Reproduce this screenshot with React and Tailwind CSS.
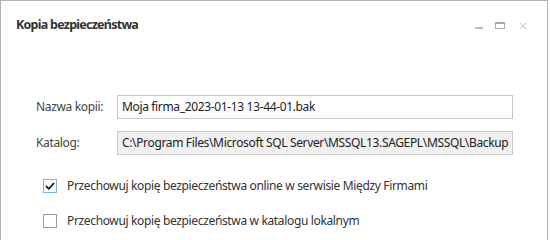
export default function App() {
  const font = { fontFamily: '"Noto Sans", "Open Sans", sans-serif' };
  return (
    <div className="w-[550px] h-[240px] bg-white overflow-hidden" style={font}>
      <div className="w-[548px] h-[260px] border border-[#b4b4b4] bg-white flex flex-col">
        <div className="flex items-center justify-between h-[48px] pl-[15px] pr-[20px]">
          <div className="text-[12.5px] font-bold text-[#333] tracking-[-0.75px]">Kopia bezpieczeństwa</div>
          <div className="flex items-start gap-[12px] pt-[2px]">
            <div className="w-[8px] h-[2px] bg-[#bdbdbd] mt-[5px]"></div>
            <div className="w-[10px] h-[7px] border border-[#aaa] border-t-2"></div>
            <svg width="8" height="8" viewBox="0 0 8 8" className="ml-[2px]">
              <path d="M0.5 0.5 L7.5 7.5 M7.5 0.5 L0.5 7.5" stroke="#bdbdbd" strokeWidth="1" />
            </svg>
          </div>
        </div>
        <div className="pl-[35px] pr-[34px] mt-[46px] flex flex-col gap-[12px] tracking-[-0.35px]">
          <div className="flex items-center">
            <div className="w-[81px] text-[12px] text-[#444]">Nazwa kopii:</div>
            <div className="flex-1 h-[24px] border border-[#c8c8c8] bg-white flex items-center px-[4px] text-[12px] text-[#222]">
              Moja firma_2023-01-13 13-44-01.bak
            </div>
          </div>
          <div className="flex items-center">
            <div className="w-[81px] text-[12px] text-[#444]">Katalog:</div>
            <div className="flex-1 h-[24px] border border-[#c8c8c8] bg-[#f0f0f0] flex items-center px-[4px] text-[12px] text-[#222] whitespace-nowrap overflow-hidden">
              C:\Program Files\Microsoft SQL Server\MSSQL13.SAGEPL\MSSQL\Backup
            </div>
          </div>
        </div>
        <div className="pl-[42px] mt-[22px] flex flex-col gap-[18px] tracking-[-0.35px]">
          <div className="flex items-center gap-[10px]">
            <div className="w-[14px] h-[14px] border border-[#73b4ec] flex items-center justify-center">
              <svg width="10" height="8" viewBox="0 0 10 8">
                <path d="M1 4 L3.8 6.8 L9 1.2" stroke="#222" strokeWidth="1.8" fill="none" />
              </svg>
            </div>
            <div className="text-[12px] text-[#333] leading-[17px]">Przechowuj kopię bezpieczeństwa online w serwisie Między Firmami</div>
          </div>
          <div className="flex items-center gap-[10px]">
            <div className="w-[14px] h-[14px] border border-[#9a9a9a]"></div>
            <div className="text-[12px] text-[#333] leading-[17px]">Przechowuj kopię bezpieczeństwa w katalogu lokalnym</div>
          </div>
        </div>
      </div>
    </div>
  );
}
